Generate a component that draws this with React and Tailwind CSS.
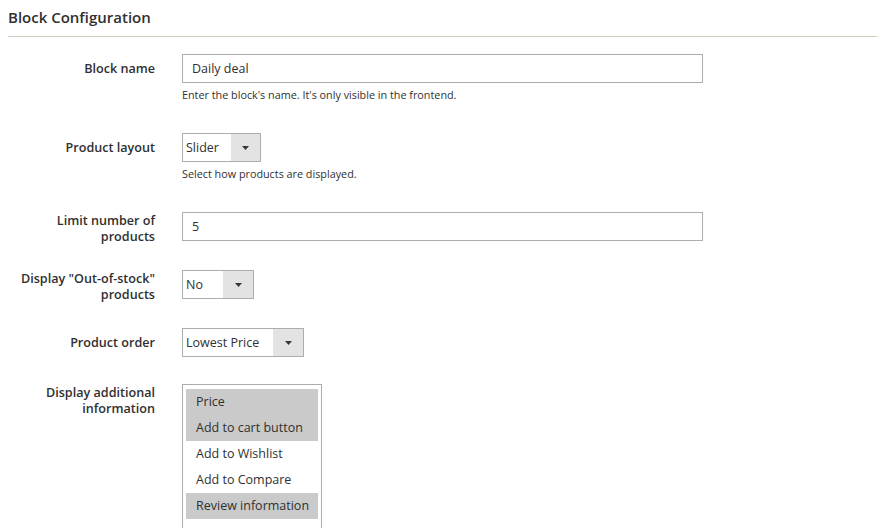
import React from "react";

// Block settings form, admin-panel style
const font = { fontFamily: '"Open Sans", "Liberation Sans", sans-serif' };

function Label({ children }) {
  return (
    <div className="w-[155px] shrink-0 text-right text-[12.6px] font-[550] leading-[16px] text-[#303030]">
      {children}
    </div>
  );
}

function Select({ value, width, buttonWidth }) {
  return (
    <div
      className="flex h-[29px] border border-[#adadad] bg-white"
      style={{ width }}
    >
      <div className="flex flex-1 items-center pl-[3px] pt-[2px] text-[12.5px] text-[#303030]">
        {value}
      </div>
      <div
        className="flex h-full items-center justify-center bg-[#e3e3e3]"
        style={{ width: buttonWidth }}
      >
        <svg width="7" height="4" viewBox="0 0 7 4">
          <path d="M0 0h7L3.5 4z" fill="#41362f" />
        </svg>
      </div>
    </div>
  );
}

export default function App() {
  const options = [
    { label: "Price", selected: true },
    { label: "Add to cart button", selected: true },
    { label: "Add to Wishlist", selected: false },
    { label: "Add to Compare", selected: false },
    { label: "Review information", selected: true },
  ];

  return (
    <div className="h-[528px] w-[895px] overflow-hidden bg-white" style={font}>
      {/* Section heading */}
      <div className="ml-2 mr-[18px] border-b border-[#d1cbc0] pt-[8px] pb-[10px]">
        <h2 className="text-[15px] font-semibold leading-[18px] text-[#303030]">
          Block Configuration
        </h2>
      </div>

      <div className="pt-[17px]">
        {/* Block name */}
        <div className="flex gap-[27px]">
          <div className="pt-[7px]">
            <Label>Block name</Label>
          </div>
          <div>
            <div className="flex h-[29px] w-[521px] items-center border border-[#adadad] px-[9px] pt-[2px] text-[12.5px] text-[#303030]">
              Daily deal
            </div>
            <div className="mt-[5px] text-[10.8px] leading-[14px] text-[#303030]">
              Enter the block's name. It's only visible in the frontend.
            </div>
          </div>
        </div>

        {/* Product layout */}
        <div className="mt-[31px] flex gap-[27px]">
          <div className="pt-[7px]">
            <Label>Product layout</Label>
          </div>
          <div>
            <Select value="Slider" width={79} buttonWidth={29} />
            <div className="mt-[5px] text-[10.8px] leading-[14px] text-[#303030]">
              Select how products are displayed.
            </div>
          </div>
        </div>

        {/* Limit number of products */}
        <div className="mt-[31px] flex h-[29px] gap-[27px]">
          <div className="pt-[1px]">
            <Label>
              Limit number of
              <br />
              products
            </Label>
          </div>
          <div className="flex h-[29px] w-[521px] items-center border border-[#adadad] px-[9px] pt-[2px] text-[12.5px] text-[#303030]">
            5
          </div>
        </div>

        {/* Out-of-stock */}
        <div className="mt-[29px] flex h-[29px] gap-[27px]">
          <div className="pt-[1px]">
            <Label>
              Display "Out-of-stock"
              <br />
              products
            </Label>
          </div>
          <Select value="No" width={72} buttonWidth={30} />
        </div>

        {/* Product order */}
        <div className="mt-[29px] flex h-[29px] gap-[27px]">
          <div className="pt-[7px]">
            <Label>Product order</Label>
          </div>
          <Select value="Lowest Price" width={122} buttonWidth={30} />
        </div>

        {/* Additional information */}
        <div className="mt-[27px] flex gap-[27px]">
          <div className="pt-[1px]">
            <Label>
              Display additional
              <br />
              information
            </Label>
          </div>
          <div className="h-[160px] w-[140px] border border-[#adadad] px-[3px] pt-[4px]">
            {options.map((o) => (
              <div
                key={o.label}
                className={`flex h-[26px] items-center whitespace-nowrap px-[10px] pt-[1px] text-[12.5px] text-[#303030] ${
                  o.selected ? "bg-[#cacaca]" : ""
                }`}
              >
                {o.label}
              </div>
            ))}
          </div>
        </div>
      </div>
    </div>
  );
}
